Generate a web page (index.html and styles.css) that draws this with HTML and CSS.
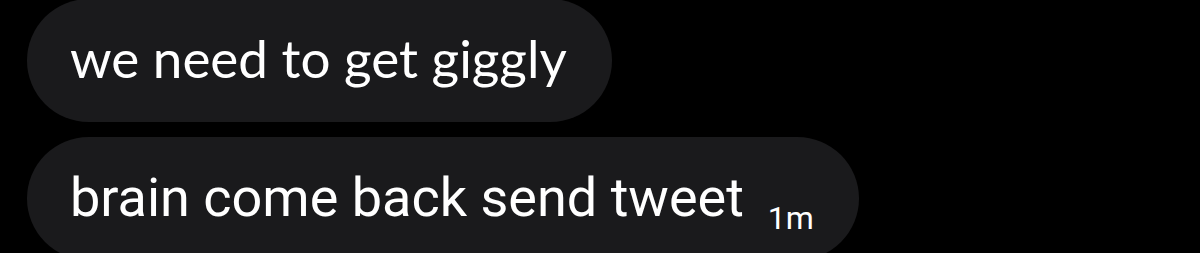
FILE: index.html
```html
<!DOCTYPE html>
<html lang="en">
<head>
    <meta charset="UTF-8">
    <title>Messages</title>
    <link rel="stylesheet" href="styles.css">
</head>
<body>
    <div class="thread">
        <!-- Earlier message -->
        <div class="bubble first">
            <span class="line">we need to get giggly</span>
        </div>

        <!-- Latest message with time -->
        <div class="bubble last">
            <span class="line">brain come back send tweet<span class="time">1m</span></span>
        </div>
    </div>
</body>
</html>
```

FILE: styles.css
```css
body {
    margin: 0;
    background-color: #000;
    overflow: hidden;
}

/* Message column */
.thread {
    display: flex;
    flex-direction: column;
    align-items: flex-start;
    gap: 15px;
    margin-top: -1px;
    padding-left: 27px;
}

/* Bubbles */
.bubble {
    display: flex;
    align-items: center;
    height: 123px;
    padding: 0 45px 6px 43px;
    background-color: #1a1a1c;
    border-radius: 62px;
    box-sizing: border-box;
    color: #fff;
    font-family: Roboto, "Liberation Sans", sans-serif;
}

.line {
    font-size: 54px;
    line-height: 1;
    white-space: nowrap;
}

.bubble.first .line {
    font-family: Lato, "Open Sans", sans-serif;
    font-size: 53px;
}

.bubble.last {
    padding-bottom: 2px;
}

/* Time stamp */
.time {
    margin-left: 24px;
    font-size: 32px;
    line-height: 0;
    vertical-align: -13px;
}
```
